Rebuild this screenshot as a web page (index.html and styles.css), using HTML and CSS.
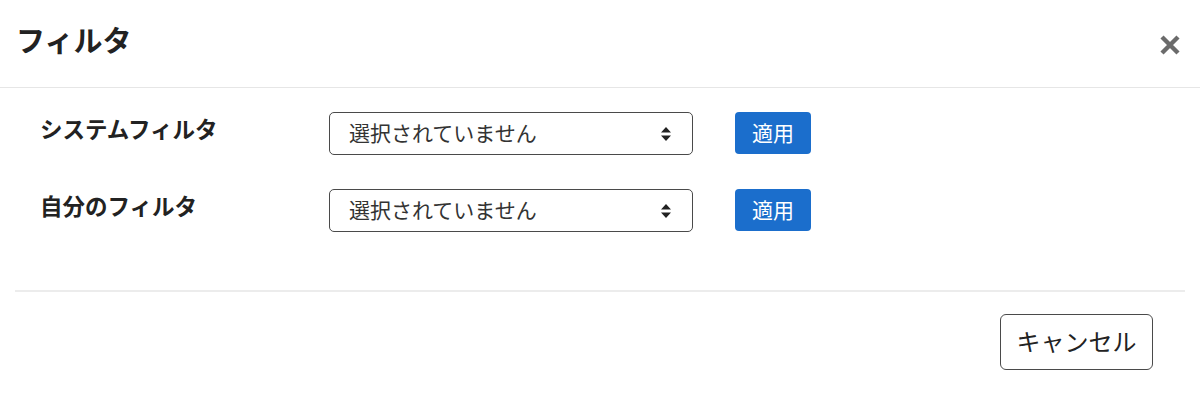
FILE: index.html
```html
<!DOCTYPE html>
<html lang="ja">
<head>
<meta charset="utf-8">
<link rel="stylesheet" href="styles.css">
</head>
<body>
<div class="modal">
  <div class="modal-header">
    <h1 class="modal-title">フィルタ</h1>
    <button class="close" type="button" aria-label="閉じる">
      <svg width="22" height="22" viewBox="0 0 22 22"><path d="M3 3L19 19M19 3L3 19" stroke="#6b6b6b" stroke-width="4.4" stroke-linecap="butt"/></svg>
    </button>
  </div>
  <div class="modal-body">
    <div class="row">
      <div class="label">システムフィルタ</div>
      <div class="select">
        <span class="select-text">選択されていません</span>
        <svg class="arrows" width="12" height="16" viewBox="0 0 12 16"><path d="M6 1L11 6.5H1Z M6 15L11 9.5H1Z" fill="#222"/></svg>
      </div>
      <button class="btn-apply" type="button">適用</button>
    </div>
    <div class="row">
      <div class="label">自分のフィルタ</div>
      <div class="select">
        <span class="select-text">選択されていません</span>
        <svg class="arrows" width="12" height="16" viewBox="0 0 12 16"><path d="M6 1L11 6.5H1Z M6 15L11 9.5H1Z" fill="#222"/></svg>
      </div>
      <button class="btn-apply" type="button">適用</button>
    </div>
  </div>
  <div class="modal-footer">
    <button class="btn-cancel" type="button">キャンセル</button>
  </div>
</div>
</body>
</html>
```
FILE: styles.css
```css
* { box-sizing: border-box; }
html, body {
  margin: 0;
  padding: 0;
  background: #fff;
  font-family: "Noto Sans CJK JP", "Noto Sans", sans-serif;
  color: #222;
}
.modal {
  width: 1200px;
  height: 408px;
}
.modal-header {
  height: 88px;
  border-bottom: 1px solid #e6e6e6;
  display: flex;
  align-items: center;
  justify-content: space-between;
  padding: 0 19px 0 16px;
}
.modal-title {
  margin: 0;
  font-size: 29px;
  font-weight: 700;
  line-height: 1;
  color: #222;
  position: relative;
  top: -4px;
}
.close {
  border: 0;
  background: none;
  padding: 0;
  width: 22px;
  height: 22px;
  display: flex;
  cursor: pointer;
  position: relative;
  top: 1px;
}
.modal-body {
  padding: 24px 40px 0 40px;
  height: 202px;
  display: flex;
  flex-direction: column;
  gap: 34px;
}
.row {
  display: flex;
  align-items: flex-start;
}
.label {
  width: 289px;
  font-size: 22.5px;
  font-weight: 700;
  line-height: 32px;
  color: #222;
}
.select {
  width: 364px;
  height: 43px;
  border: 1px solid #4a4a4a;
  border-radius: 5px;
  display: flex;
  align-items: center;
  justify-content: space-between;
  padding: 0 20px 0 19px;
}
.select-text {
  font-size: 21px;
  color: #333;
  line-height: 1;
  position: relative;
  top: -1px;
}
.arrows { display: block; }
.btn-apply {
  margin-left: 42px;
  width: 76px;
  height: 42px;
  border: 0;
  border-radius: 4px;
  background: #1b6ecc;
  color: #fff;
  font-family: inherit;
  font-size: 21px;
  line-height: 1;
  padding: 0 0 2px 0;
}
.modal-footer {
  margin: 0 15px;
  border-top: 2px solid #ececec;
  padding: 22px 32px 0 0;
  display: flex;
  justify-content: flex-end;
}
.btn-cancel {
  width: 153px;
  height: 56px;
  border: 1.5px solid #4a4a4a;
  border-radius: 6px;
  background: #fff;
  color: #222;
  font-family: inherit;
  font-size: 24px;
  line-height: 1;
  padding: 0 0 2px 0;
}
```
